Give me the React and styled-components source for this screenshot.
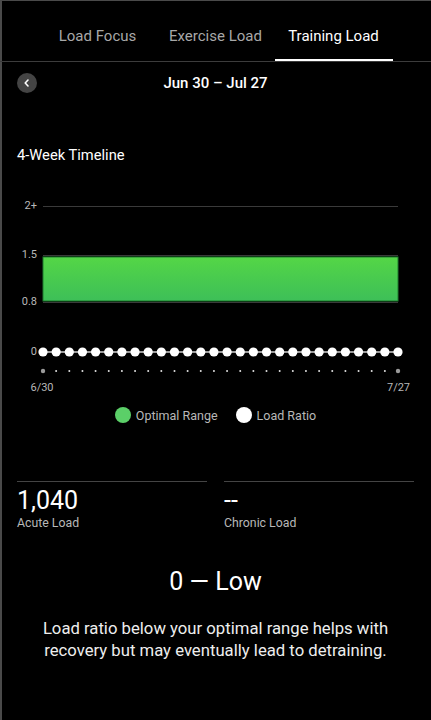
import React from 'react';
import styled, { createGlobalStyle } from 'styled-components';

const GlobalStyle = createGlobalStyle`
  html, body {
    margin: 0;
    padding: 0;
    background: #000;
  }
  * {
    box-sizing: border-box;
  }
`;

const Screen = styled.div`
  width: 431px;
  height: 720px;
  background: #000;
  color: #fff;
  font-family: Roboto, "Noto Sans", "Liberation Sans", sans-serif;
  box-shadow: inset 2px 1px 0 #4a4a4a;
  overflow: hidden;
`;

const TabBar = styled.nav`
  display: flex;
  justify-content: center;
  height: 62px;
  border-bottom: 1px solid #3c3c3c;
`;

const Tab = styled.div`
  width: 118px;
  height: 61px;
  padding-top: 13px;
  display: flex;
  align-items: center;
  justify-content: center;
  font-size: 15px;
  color: ${p => (p.$active ? '#fff' : '#a8a8a8')};
  border-bottom: 2px solid ${p => (p.$active ? '#fff' : 'transparent')};
`;

const DateRow = styled.div`
  display: grid;
  grid-template-columns: 1fr auto 1fr;
  align-items: center;
  height: 42px;
  padding: 0 17px;
`;

const BackButton = styled.div`
  width: 20px;
  height: 20px;
  border-radius: 50%;
  background: #444;
  display: flex;
  align-items: center;
  justify-content: center;
`;

const DateTitle = styled.div`
  font-size: 15px;
  font-weight: 500;
`;

const SectionTitle = styled.h2`
  margin: 41px 0 0;
  padding: 0 17px;
  font-size: 14.7px;
  font-weight: 400;
  line-height: 20px;
`;

const ChartWrap = styled.div`
  margin-top: 25px;
  height: 210px;
`;

const Legend = styled.div`
  display: flex;
  justify-content: center;
  align-items: center;
  gap: 18px;
  height: 20px;
  margin-top: 5px;
  font-size: 12.5px;
  color: #b8b8b8;
`;

const LegendItem = styled.div`
  display: flex;
  align-items: center;
  gap: 5px;
`;

const Swatch = styled.span`
  width: 16px;
  height: 16px;
  border-radius: 50%;
  background: ${p => p.$color};
`;

const Stats = styled.div`
  display: grid;
  grid-template-columns: 1fr 1fr;
  gap: 17px;
  padding: 0 17px;
  margin-top: 56px;
`;

const Stat = styled.div`
  border-top: 1px solid #444;
  padding-top: 5px;
`;

const StatValue = styled.div`
  font-size: 25px;
  line-height: 28px;
`;

const StatLabel = styled.div`
  font-size: 12.3px;
  line-height: 16px;
  color: #b8b8b8;
`;

const Status = styled.div`
  margin-top: 36px;
  text-align: center;
  font-size: 25px;
  line-height: 30px;
`;

const Description = styled.p`
  margin: 21px 0 0;
  padding: 0 20px;
  text-align: center;
  font-size: 16.7px;
  line-height: 22px;
  color: #eee;
`;

const X0 = 43;
const X1 = 398;
const COUNT = 28;
const xs = Array.from({ length: COUNT }, (_, i) => X0 + ((X1 - X0) * i) / (COUNT - 1));

function Chart() {
  const label = { fill: '#b8b8b8', fontSize: 11, fontFamily: 'Roboto, sans-serif' };
  return (
    <svg width="431" height="210" viewBox="0 0 431 210">
      <defs>
        <linearGradient id="optimal" x1="0" y1="0" x2="0" y2="1">
          <stop offset="0" stopColor="#54d646" />
          <stop offset="1" stopColor="#3dbf58" />
        </linearGradient>
      </defs>
      {[[16, '2+'], [65, '1.5'], [112, '0.8']].map(([y, t]) => (
        <g key={t}>
          <line x1={X0} x2={X1} y1={y + 0.5} y2={y + 0.5} stroke="#3a3a3a" strokeWidth="1" />
          <text x="37" y={y} textAnchor="end" dominantBaseline="middle" {...label}>{t}</text>
        </g>
      ))}
      <rect x={X0} y="67" width={X1 - X0} height="44" fill="url(#optimal)" stroke="#1f7a2e" strokeWidth="1" />
      <text x="37" y="162" textAnchor="end" dominantBaseline="middle" {...label}>0</text>
      <line x1={X0} x2={X1} y1="162" y2="162" stroke="#cfcfcf" strokeWidth="1.5" />
      {xs.map((x, i) => (
        <circle key={'d' + i} cx={x} cy="162" r="4.6" fill="#fff" />
      ))}
      {xs.map((x, i) => {
        const edge = i === 0 || i === COUNT - 1;
        return <circle key={'t' + i} cx={x} cy="181" r={edge ? 2.2 : 1} fill={edge ? '#9a9a9a' : '#e0e0e0'} />;
      })}
      <text x="42" y="198" textAnchor="middle" dominantBaseline="middle" {...label}>6/30</text>
      <text x="398.5" y="198" textAnchor="middle" dominantBaseline="middle" {...label}>7/27</text>
    </svg>
  );
}

export default function App() {
  return (
    <>
      <GlobalStyle />
      <Screen>
        <TabBar>
          <Tab>Load Focus</Tab>
          <Tab>Exercise Load</Tab>
          <Tab $active>Training Load</Tab>
        </TabBar>
        <DateRow>
          <BackButton>
            <svg width="10" height="10" viewBox="0 0 10 10">
              <path d="M6 2 L3.2 5 L6 8" fill="none" stroke="#fff" strokeWidth="1.6" strokeLinecap="round" strokeLinejoin="round" />
            </svg>
          </BackButton>
          <DateTitle>Jun 30 – Jul 27</DateTitle>
          <span />
        </DateRow>
        <SectionTitle>4-Week Timeline</SectionTitle>
        <ChartWrap>
          <Chart />
        </ChartWrap>
        <Legend>
          <LegendItem>
            <Swatch $color="#5bcf68" />
            Optimal Range
          </LegendItem>
          <LegendItem>
            <Swatch $color="#fff" />
            Load Ratio
          </LegendItem>
        </Legend>
        <Stats>
          <Stat>
            <StatValue>1,040</StatValue>
            <StatLabel>Acute Load</StatLabel>
          </Stat>
          <Stat>
            <StatValue>--</StatValue>
            <StatLabel>Chronic Load</StatLabel>
          </Stat>
        </Stats>
        <Status>0 — Low</Status>
        <Description>
          Load ratio below your optimal range helps with recovery but may eventually lead to detraining.
        </Description>
      </Screen>
    </>
  );
}
